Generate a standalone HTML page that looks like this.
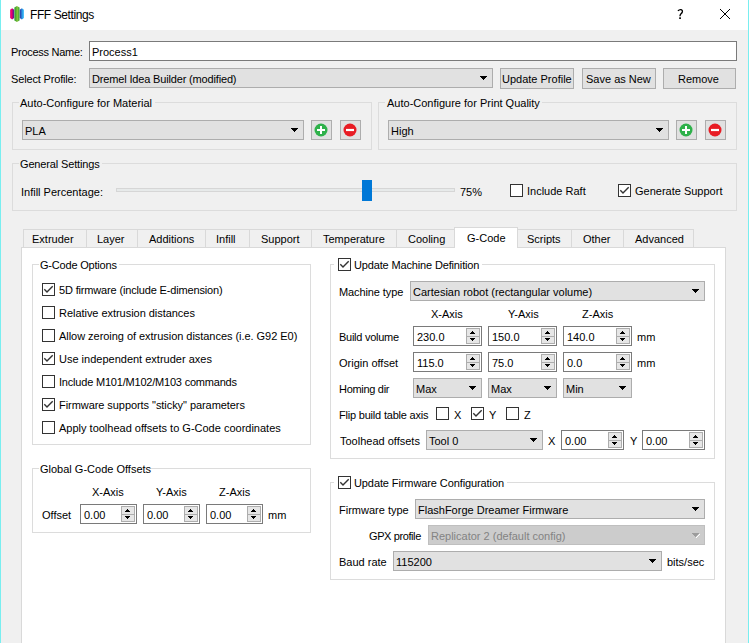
<!DOCTYPE html><html><head><meta charset="utf-8"><style>
html,body{margin:0;padding:0;}
body{width:749px;height:643px;overflow:hidden;background:#f0f0f0;position:relative;font-family:"Liberation Sans",sans-serif;font-size:11px;color:#000;}
.a{position:absolute;box-sizing:border-box;}
.t{position:absolute;line-height:13px;white-space:nowrap;}
</style></head><body>
<div class="a" style="left:0px;top:0px;width:749px;height:30px;background:#ffffff;"></div>
<svg class="a" style="left:9px;top:5px" width="17" height="18" viewBox="0 0 17 18">
<defs>
<linearGradient id="gm" x1="0" y1="0" x2="1" y2="0"><stop offset="0" stop-color="#d8108a"/><stop offset="0.35" stop-color="#f0006a"/><stop offset="1" stop-color="#4a1a9a"/></linearGradient>
<linearGradient id="gg" x1="0" y1="0" x2="1" y2="0"><stop offset="0" stop-color="#22962e"/><stop offset="0.6" stop-color="#86c43a"/><stop offset="1" stop-color="#2a9a34"/></linearGradient>
<linearGradient id="gb" x1="0" y1="0" x2="1" y2="0"><stop offset="0" stop-color="#2a2a9e"/><stop offset="0.7" stop-color="#2aaaf0"/><stop offset="1" stop-color="#60c8f8"/></linearGradient>
</defs>
<path d="M3.15 3.3 L5.2 4.8 V13.1 L3.15 14.6 L1.1 13.1 V4.8 Z" fill="url(#gm)"/>
<path d="M12.85 3.3 L15 4.8 V13.1 L12.85 14.6 L10.7 13.1 V4.8 Z" fill="url(#gb)"/>
<path d="M7.95 0.9 L10.5 2.4 V15.5 L7.95 17 L5.4 15.5 V2.4 Z" fill="url(#gg)"/>
</svg>
<div class="t" style="left:30px;top:9px;font-size:12px;letter-spacing:-0.4px;">FFF Settings</div>
<svg class="a" style="left:0;top:0" width="749" height="30"><path d="M677.9 10.9 Q679.3 9.3 681 9.6 Q682.8 10.1 682.3 12 Q682 13 680.8 14 Q680 14.8 680 16.2" fill="none" stroke="#000" stroke-width="1.35"/><rect x="679.2" y="17.3" width="1.7" height="1.7" fill="#000"/></svg>
<div class="a" style="left:720px;top:9px;width:1px;height:1px;background:#000"></div>
<div class="a" style="left:729px;top:9px;width:1px;height:1px;background:#000"></div>
<div class="a" style="left:721px;top:10px;width:1px;height:1px;background:#000"></div>
<div class="a" style="left:728px;top:10px;width:1px;height:1px;background:#000"></div>
<div class="a" style="left:722px;top:11px;width:1px;height:1px;background:#000"></div>
<div class="a" style="left:727px;top:11px;width:1px;height:1px;background:#000"></div>
<div class="a" style="left:723px;top:12px;width:1px;height:1px;background:#000"></div>
<div class="a" style="left:726px;top:12px;width:1px;height:1px;background:#000"></div>
<div class="a" style="left:724px;top:13px;width:1px;height:1px;background:#000"></div>
<div class="a" style="left:725px;top:13px;width:1px;height:1px;background:#000"></div>
<div class="a" style="left:725px;top:14px;width:1px;height:1px;background:#000"></div>
<div class="a" style="left:724px;top:14px;width:1px;height:1px;background:#000"></div>
<div class="a" style="left:726px;top:15px;width:1px;height:1px;background:#000"></div>
<div class="a" style="left:723px;top:15px;width:1px;height:1px;background:#000"></div>
<div class="a" style="left:727px;top:16px;width:1px;height:1px;background:#000"></div>
<div class="a" style="left:722px;top:16px;width:1px;height:1px;background:#000"></div>
<div class="a" style="left:728px;top:17px;width:1px;height:1px;background:#000"></div>
<div class="a" style="left:721px;top:17px;width:1px;height:1px;background:#000"></div>
<div class="a" style="left:729px;top:18px;width:1px;height:1px;background:#000"></div>
<div class="a" style="left:720px;top:18px;width:1px;height:1px;background:#000"></div>
<div class="a" style="left:0px;top:0px;width:1px;height:643px;background:#78eef0;"></div>
<div class="a" style="left:748px;top:0px;width:1px;height:643px;background:#78eef0;"></div>
<div class="t" style="left:11px;top:46px;letter-spacing:-0.28px;">Process Name:</div>
<div class="a" style="left:89px;top:41px;width:648px;height:20px;box-shadow:inset 0 0 0 1px #7a7a7a;background:#ffffff;"></div>
<div class="t" style="left:92px;top:46px;">Process1</div>
<div class="t" style="left:11px;top:73px;letter-spacing:-0.16px;">Select Profile:</div>
<div class="a" style="left:89px;top:68px;width:404px;height:20px;box-shadow:inset 0 0 0 1px #adadad;background:#e1e1e1;"></div>
<div class="t" style="left:92px;top:73px;letter-spacing:-0.16px;">Dremel Idea Builder (modified)</div>
<div class="a" style="left:480px;top:76px;width:7px;height:1px;background:#000"></div>
<div class="a" style="left:481px;top:77px;width:5px;height:1px;background:#000"></div>
<div class="a" style="left:482px;top:78px;width:3px;height:1px;background:#000"></div>
<div class="a" style="left:483px;top:79px;width:1px;height:1px;background:#000"></div>
<div class="a" style="left:500px;top:68px;width:74px;height:21px;box-shadow:inset 0 0 0 1px #adadad;background:#e1e1e1;"></div>
<div class="t" style="left:502px;top:73px;">Update Profile</div>
<div class="a" style="left:582px;top:68px;width:74px;height:21px;box-shadow:inset 0 0 0 1px #adadad;background:#e1e1e1;"></div>
<div class="t" style="left:586px;top:73px;">Save as New</div>
<div class="a" style="left:663px;top:68px;width:73px;height:21px;box-shadow:inset 0 0 0 1px #adadad;background:#e1e1e1;"></div>
<div class="t" style="left:678px;top:73px;">Remove</div>
<div class="a" style="left:12px;top:102px;width:360px;height:48px;box-shadow:inset 0 0 0 1px #dcdcdc;"></div>
<div class="a" style="left:19px;top:102px;width:136px;height:1px;background:#f0f0f0"></div>
<div class="t" style="left:20px;top:97px;">Auto-Configure for Material</div>
<div class="a" style="left:22px;top:120px;width:282px;height:20px;box-shadow:inset 0 0 0 1px #adadad;background:#e1e1e1;"></div>
<div class="t" style="left:25px;top:125px;">PLA</div>
<div class="a" style="left:291px;top:128px;width:7px;height:1px;background:#000"></div>
<div class="a" style="left:292px;top:129px;width:5px;height:1px;background:#000"></div>
<div class="a" style="left:293px;top:130px;width:3px;height:1px;background:#000"></div>
<div class="a" style="left:294px;top:131px;width:1px;height:1px;background:#000"></div>
<div class="a" style="left:378px;top:102px;width:359px;height:48px;box-shadow:inset 0 0 0 1px #dcdcdc;"></div>
<div class="a" style="left:385px;top:102px;width:157px;height:1px;background:#f0f0f0"></div>
<div class="t" style="left:387px;top:97px;">Auto-Configure for Print Quality</div>
<div class="a" style="left:388px;top:120px;width:281px;height:20px;box-shadow:inset 0 0 0 1px #adadad;background:#e1e1e1;"></div>
<div class="t" style="left:391px;top:125px;">High</div>
<div class="a" style="left:656px;top:128px;width:7px;height:1px;background:#000"></div>
<div class="a" style="left:657px;top:129px;width:5px;height:1px;background:#000"></div>
<div class="a" style="left:658px;top:130px;width:3px;height:1px;background:#000"></div>
<div class="a" style="left:659px;top:131px;width:1px;height:1px;background:#000"></div>
<div class="a" style="left:311px;top:120px;width:21px;height:20px;box-shadow:inset 0 0 0 1px #adadad;background:#e1e1e1;"></div>
<svg class="a" style="left:0;top:0" width="749" height="643"><circle cx="321" cy="130" r="6.5" fill="#2eb14a"/><path d="M317 130 H325 M321 126 V134" stroke="#fff" stroke-width="2"/></svg>
<div class="a" style="left:340px;top:120px;width:21px;height:20px;box-shadow:inset 0 0 0 1px #adadad;background:#e1e1e1;"></div>
<svg class="a" style="left:0;top:0" width="749" height="643"><circle cx="350" cy="130" r="6.5" fill="#e81c24"/><path d="M346 130 H354" stroke="#fff" stroke-width="2.2"/></svg>
<div class="a" style="left:676px;top:120px;width:21px;height:20px;box-shadow:inset 0 0 0 1px #adadad;background:#e1e1e1;"></div>
<svg class="a" style="left:0;top:0" width="749" height="643"><circle cx="686" cy="130" r="6.5" fill="#2eb14a"/><path d="M682 130 H690 M686 126 V134" stroke="#fff" stroke-width="2"/></svg>
<div class="a" style="left:705px;top:120px;width:21px;height:20px;box-shadow:inset 0 0 0 1px #adadad;background:#e1e1e1;"></div>
<svg class="a" style="left:0;top:0" width="749" height="643"><circle cx="715" cy="130" r="6.5" fill="#e81c24"/><path d="M711 130 H719" stroke="#fff" stroke-width="2.2"/></svg>
<div class="a" style="left:12px;top:163px;width:725px;height:48px;box-shadow:inset 0 0 0 1px #dcdcdc;"></div>
<div class="a" style="left:19px;top:163px;width:83px;height:1px;background:#f0f0f0"></div>
<div class="t" style="left:20px;top:158px;letter-spacing:-0.15px;">General Settings</div>
<div class="t" style="left:21px;top:186px;">Infill Percentage:</div>
<div class="a" style="left:116px;top:188px;width:339px;height:4px;box-shadow:inset 0 0 0 1px #d6d6d6;background:#e7eaea;"></div>
<div class="a" style="left:362px;top:180px;width:10px;height:21px;background:#0078d7;"></div>
<div class="t" style="left:460px;top:186px;">75%</div>
<div class="a" style="left:510px;top:184px;width:13px;height:13px;box-shadow:inset 0 0 0 1px #333333;background:#ffffff;"></div>
<div class="t" style="left:527px;top:185px;">Include Raft</div>
<div class="a" style="left:618px;top:184px;width:13px;height:13px;box-shadow:inset 0 0 0 1px #333333;background:#ffffff;"></div>
<svg class="a" style="left:618px;top:184px" width="13" height="13" viewBox="0 0 13 13"><path d="M2.3 6.3 L5 9 L10.7 3.3" fill="none" stroke="#333" stroke-width="1.4"/></svg>
<div class="t" style="left:635px;top:185px;">Generate Support</div>
<div class="a" style="left:23px;top:229px;width:64px;height:19px;box-shadow:inset 0 0 0 1px #d9d9d9;background:#f0f0f0;"></div>
<div class="t" style="left:32px;top:233px;">Extruder</div>
<div class="a" style="left:86px;top:229px;width:52px;height:19px;box-shadow:inset 0 0 0 1px #d9d9d9;background:#f0f0f0;"></div>
<div class="t" style="left:97px;top:233px;">Layer</div>
<div class="a" style="left:137px;top:229px;width:69px;height:19px;box-shadow:inset 0 0 0 1px #d9d9d9;background:#f0f0f0;"></div>
<div class="t" style="left:149px;top:233px;">Additions</div>
<div class="a" style="left:205px;top:229px;width:45px;height:19px;box-shadow:inset 0 0 0 1px #d9d9d9;background:#f0f0f0;"></div>
<div class="t" style="left:216px;top:233px;">Infill</div>
<div class="a" style="left:249px;top:229px;width:63px;height:19px;box-shadow:inset 0 0 0 1px #d9d9d9;background:#f0f0f0;"></div>
<div class="t" style="left:261px;top:233px;">Support</div>
<div class="a" style="left:311px;top:229px;width:86px;height:19px;box-shadow:inset 0 0 0 1px #d9d9d9;background:#f0f0f0;"></div>
<div class="t" style="left:323px;top:233px;">Temperature</div>
<div class="a" style="left:396px;top:229px;width:59px;height:19px;box-shadow:inset 0 0 0 1px #d9d9d9;background:#f0f0f0;"></div>
<div class="t" style="left:408px;top:233px;">Cooling</div>
<div class="a" style="left:517px;top:229px;width:55px;height:19px;box-shadow:inset 0 0 0 1px #d9d9d9;background:#f0f0f0;"></div>
<div class="t" style="left:527px;top:233px;">Scripts</div>
<div class="a" style="left:571px;top:229px;width:53px;height:19px;box-shadow:inset 0 0 0 1px #d9d9d9;background:#f0f0f0;"></div>
<div class="t" style="left:583px;top:233px;">Other</div>
<div class="a" style="left:623px;top:229px;width:71px;height:19px;box-shadow:inset 0 0 0 1px #d9d9d9;background:#f0f0f0;"></div>
<div class="t" style="left:635px;top:233px;">Advanced</div>
<div class="a" style="left:21px;top:247px;width:705px;height:454px;box-shadow:inset 0 0 0 1px #d9d9d9;background:#ffffff;"></div>
<div class="a" style="left:454px;top:227px;width:64px;height:21px;box-shadow:inset 0 0 0 1px #d9d9d9;background:#ffffff;"></div>
<div class="a" style="left:455px;top:247px;width:62px;height:1px;background:#ffffff;"></div>
<div class="t" style="left:467px;top:232px;">G-Code</div>
<div class="a" style="left:32px;top:264px;width:279px;height:181px;box-shadow:inset 0 0 0 1px #dcdcdc;"></div>
<div class="a" style="left:39px;top:264px;width:80px;height:1px;background:#ffffff"></div>
<div class="t" style="left:40px;top:259px;letter-spacing:-0.2px;">G-Code Options</div>
<div class="a" style="left:42px;top:283px;width:13px;height:13px;box-shadow:inset 0 0 0 1px #333333;background:#ffffff;"></div>
<svg class="a" style="left:42px;top:283px" width="13" height="13" viewBox="0 0 13 13"><path d="M2.3 6.3 L5 9 L10.7 3.3" fill="none" stroke="#333" stroke-width="1.4"/></svg>
<div class="t" style="left:59px;top:284px;letter-spacing:-0.16px;">5D firmware (include E-dimension)</div>
<div class="a" style="left:42px;top:306px;width:13px;height:13px;box-shadow:inset 0 0 0 1px #333333;background:#ffffff;"></div>
<div class="t" style="left:59px;top:307px;letter-spacing:-0.04px;">Relative extrusion distances</div>
<div class="a" style="left:42px;top:329px;width:13px;height:13px;box-shadow:inset 0 0 0 1px #333333;background:#ffffff;"></div>
<div class="t" style="left:59px;top:330px;letter-spacing:-0.04px;">Allow zeroing of extrusion distances (i.e. G92 E0)</div>
<div class="a" style="left:42px;top:352px;width:13px;height:13px;box-shadow:inset 0 0 0 1px #333333;background:#ffffff;"></div>
<svg class="a" style="left:42px;top:352px" width="13" height="13" viewBox="0 0 13 13"><path d="M2.3 6.3 L5 9 L10.7 3.3" fill="none" stroke="#333" stroke-width="1.4"/></svg>
<div class="t" style="left:59px;top:353px;letter-spacing:0px;">Use independent extruder axes</div>
<div class="a" style="left:42px;top:375px;width:13px;height:13px;box-shadow:inset 0 0 0 1px #333333;background:#ffffff;"></div>
<div class="t" style="left:59px;top:376px;letter-spacing:-0.2px;">Include M101/M102/M103 commands</div>
<div class="a" style="left:42px;top:398px;width:13px;height:13px;box-shadow:inset 0 0 0 1px #333333;background:#ffffff;"></div>
<svg class="a" style="left:42px;top:398px" width="13" height="13" viewBox="0 0 13 13"><path d="M2.3 6.3 L5 9 L10.7 3.3" fill="none" stroke="#333" stroke-width="1.4"/></svg>
<div class="t" style="left:59px;top:399px;letter-spacing:-0.06px;">Firmware supports "sticky" parameters</div>
<div class="a" style="left:42px;top:421px;width:13px;height:13px;box-shadow:inset 0 0 0 1px #333333;background:#ffffff;"></div>
<div class="t" style="left:59px;top:422px;letter-spacing:0px;">Apply toolhead offsets to G-Code coordinates</div>
<div class="a" style="left:32px;top:468px;width:279px;height:65px;box-shadow:inset 0 0 0 1px #dcdcdc;"></div>
<div class="a" style="left:39px;top:468px;width:111px;height:1px;background:#ffffff"></div>
<div class="t" style="left:40px;top:463px;">Global G-Code Offsets</div>
<div class="t" style="left:92px;top:486px;">X-Axis</div>
<div class="t" style="left:156px;top:486px;">Y-Axis</div>
<div class="t" style="left:219px;top:486px;">Z-Axis</div>
<div class="t" style="left:42px;top:509px;">Offset</div>
<div class="a" style="left:80px;top:504px;width:57px;height:20px;box-shadow:inset 0 0 0 1px #7a7a7a;background:#ffffff;"></div>
<div class="t" style="left:84px;top:509px;">0.00</div>
<div class="a" style="left:121px;top:506px;width:14px;height:9px;box-shadow:inset 0 0 0 1px #adadad;background:#e6e6e6;"></div>
<div class="a" style="left:121px;top:514px;width:14px;height:8px;box-shadow:inset 0 0 0 1px #adadad;background:#e6e6e6;"></div>
<div class="a" style="left:127px;top:509px;width:1px;height:1px;background:#000"></div>
<div class="a" style="left:126px;top:510px;width:3px;height:1px;background:#000"></div>
<div class="a" style="left:125px;top:511px;width:5px;height:1px;background:#000"></div>
<div class="a" style="left:125px;top:516px;width:5px;height:1px;background:#000"></div>
<div class="a" style="left:126px;top:517px;width:3px;height:1px;background:#000"></div>
<div class="a" style="left:127px;top:518px;width:1px;height:1px;background:#000"></div>
<div class="a" style="left:143px;top:504px;width:57px;height:20px;box-shadow:inset 0 0 0 1px #7a7a7a;background:#ffffff;"></div>
<div class="t" style="left:147px;top:509px;">0.00</div>
<div class="a" style="left:184px;top:506px;width:14px;height:9px;box-shadow:inset 0 0 0 1px #adadad;background:#e6e6e6;"></div>
<div class="a" style="left:184px;top:514px;width:14px;height:8px;box-shadow:inset 0 0 0 1px #adadad;background:#e6e6e6;"></div>
<div class="a" style="left:190px;top:509px;width:1px;height:1px;background:#000"></div>
<div class="a" style="left:189px;top:510px;width:3px;height:1px;background:#000"></div>
<div class="a" style="left:188px;top:511px;width:5px;height:1px;background:#000"></div>
<div class="a" style="left:188px;top:516px;width:5px;height:1px;background:#000"></div>
<div class="a" style="left:189px;top:517px;width:3px;height:1px;background:#000"></div>
<div class="a" style="left:190px;top:518px;width:1px;height:1px;background:#000"></div>
<div class="a" style="left:206px;top:504px;width:57px;height:20px;box-shadow:inset 0 0 0 1px #7a7a7a;background:#ffffff;"></div>
<div class="t" style="left:210px;top:509px;">0.00</div>
<div class="a" style="left:247px;top:506px;width:14px;height:9px;box-shadow:inset 0 0 0 1px #adadad;background:#e6e6e6;"></div>
<div class="a" style="left:247px;top:514px;width:14px;height:8px;box-shadow:inset 0 0 0 1px #adadad;background:#e6e6e6;"></div>
<div class="a" style="left:253px;top:509px;width:1px;height:1px;background:#000"></div>
<div class="a" style="left:252px;top:510px;width:3px;height:1px;background:#000"></div>
<div class="a" style="left:251px;top:511px;width:5px;height:1px;background:#000"></div>
<div class="a" style="left:251px;top:516px;width:5px;height:1px;background:#000"></div>
<div class="a" style="left:252px;top:517px;width:3px;height:1px;background:#000"></div>
<div class="a" style="left:253px;top:518px;width:1px;height:1px;background:#000"></div>
<div class="t" style="left:268px;top:509px;">mm</div>
<div class="a" style="left:330px;top:264px;width:385px;height:195px;box-shadow:inset 0 0 0 1px #dcdcdc;"></div>
<div class="a" style="left:334px;top:264px;width:148px;height:1px;background:#ffffff"></div>
<div class="a" style="left:338px;top:258px;width:13px;height:13px;box-shadow:inset 0 0 0 1px #333333;background:#ffffff;"></div>
<svg class="a" style="left:338px;top:258px" width="13" height="13" viewBox="0 0 13 13"><path d="M2.3 6.3 L5 9 L10.7 3.3" fill="none" stroke="#333" stroke-width="1.4"/></svg>
<div class="t" style="left:354px;top:259px;letter-spacing:-0.15px;">Update Machine Definition</div>
<div class="t" style="left:339px;top:286px;letter-spacing:-0.1px;">Machine type</div>
<div class="a" style="left:410px;top:281px;width:295px;height:20px;box-shadow:inset 0 0 0 1px #adadad;background:#e1e1e1;"></div>
<div class="t" style="left:413px;top:286px;">Cartesian robot (rectangular volume)</div>
<div class="a" style="left:692px;top:289px;width:7px;height:1px;background:#000"></div>
<div class="a" style="left:693px;top:290px;width:5px;height:1px;background:#000"></div>
<div class="a" style="left:694px;top:291px;width:3px;height:1px;background:#000"></div>
<div class="a" style="left:695px;top:292px;width:1px;height:1px;background:#000"></div>
<div class="t" style="left:431px;top:308px;">X-Axis</div>
<div class="t" style="left:508px;top:308px;">Y-Axis</div>
<div class="t" style="left:582px;top:308px;">Z-Axis</div>
<div class="t" style="left:339px;top:331px;letter-spacing:-0.27px;">Build volume</div>
<div class="a" style="left:413px;top:326px;width:69px;height:20px;box-shadow:inset 0 0 0 1px #7a7a7a;background:#ffffff;"></div>
<div class="t" style="left:417px;top:331px;">230.0</div>
<div class="a" style="left:466px;top:328px;width:14px;height:9px;box-shadow:inset 0 0 0 1px #adadad;background:#e6e6e6;"></div>
<div class="a" style="left:466px;top:336px;width:14px;height:8px;box-shadow:inset 0 0 0 1px #adadad;background:#e6e6e6;"></div>
<div class="a" style="left:472px;top:331px;width:1px;height:1px;background:#000"></div>
<div class="a" style="left:471px;top:332px;width:3px;height:1px;background:#000"></div>
<div class="a" style="left:470px;top:333px;width:5px;height:1px;background:#000"></div>
<div class="a" style="left:470px;top:338px;width:5px;height:1px;background:#000"></div>
<div class="a" style="left:471px;top:339px;width:3px;height:1px;background:#000"></div>
<div class="a" style="left:472px;top:340px;width:1px;height:1px;background:#000"></div>
<div class="a" style="left:488px;top:326px;width:69px;height:20px;box-shadow:inset 0 0 0 1px #7a7a7a;background:#ffffff;"></div>
<div class="t" style="left:492px;top:331px;">150.0</div>
<div class="a" style="left:541px;top:328px;width:14px;height:9px;box-shadow:inset 0 0 0 1px #adadad;background:#e6e6e6;"></div>
<div class="a" style="left:541px;top:336px;width:14px;height:8px;box-shadow:inset 0 0 0 1px #adadad;background:#e6e6e6;"></div>
<div class="a" style="left:547px;top:331px;width:1px;height:1px;background:#000"></div>
<div class="a" style="left:546px;top:332px;width:3px;height:1px;background:#000"></div>
<div class="a" style="left:545px;top:333px;width:5px;height:1px;background:#000"></div>
<div class="a" style="left:545px;top:338px;width:5px;height:1px;background:#000"></div>
<div class="a" style="left:546px;top:339px;width:3px;height:1px;background:#000"></div>
<div class="a" style="left:547px;top:340px;width:1px;height:1px;background:#000"></div>
<div class="a" style="left:563px;top:326px;width:69px;height:20px;box-shadow:inset 0 0 0 1px #7a7a7a;background:#ffffff;"></div>
<div class="t" style="left:567px;top:331px;">140.0</div>
<div class="a" style="left:616px;top:328px;width:14px;height:9px;box-shadow:inset 0 0 0 1px #adadad;background:#e6e6e6;"></div>
<div class="a" style="left:616px;top:336px;width:14px;height:8px;box-shadow:inset 0 0 0 1px #adadad;background:#e6e6e6;"></div>
<div class="a" style="left:622px;top:331px;width:1px;height:1px;background:#000"></div>
<div class="a" style="left:621px;top:332px;width:3px;height:1px;background:#000"></div>
<div class="a" style="left:620px;top:333px;width:5px;height:1px;background:#000"></div>
<div class="a" style="left:620px;top:338px;width:5px;height:1px;background:#000"></div>
<div class="a" style="left:621px;top:339px;width:3px;height:1px;background:#000"></div>
<div class="a" style="left:622px;top:340px;width:1px;height:1px;background:#000"></div>
<div class="t" style="left:637px;top:331px;">mm</div>
<div class="t" style="left:339px;top:357px;">Origin offset</div>
<div class="a" style="left:413px;top:352px;width:69px;height:20px;box-shadow:inset 0 0 0 1px #7a7a7a;background:#ffffff;"></div>
<div class="t" style="left:417px;top:357px;">115.0</div>
<div class="a" style="left:466px;top:354px;width:14px;height:9px;box-shadow:inset 0 0 0 1px #adadad;background:#e6e6e6;"></div>
<div class="a" style="left:466px;top:362px;width:14px;height:8px;box-shadow:inset 0 0 0 1px #adadad;background:#e6e6e6;"></div>
<div class="a" style="left:472px;top:357px;width:1px;height:1px;background:#000"></div>
<div class="a" style="left:471px;top:358px;width:3px;height:1px;background:#000"></div>
<div class="a" style="left:470px;top:359px;width:5px;height:1px;background:#000"></div>
<div class="a" style="left:470px;top:364px;width:5px;height:1px;background:#000"></div>
<div class="a" style="left:471px;top:365px;width:3px;height:1px;background:#000"></div>
<div class="a" style="left:472px;top:366px;width:1px;height:1px;background:#000"></div>
<div class="a" style="left:488px;top:352px;width:69px;height:20px;box-shadow:inset 0 0 0 1px #7a7a7a;background:#ffffff;"></div>
<div class="t" style="left:492px;top:357px;">75.0</div>
<div class="a" style="left:541px;top:354px;width:14px;height:9px;box-shadow:inset 0 0 0 1px #adadad;background:#e6e6e6;"></div>
<div class="a" style="left:541px;top:362px;width:14px;height:8px;box-shadow:inset 0 0 0 1px #adadad;background:#e6e6e6;"></div>
<div class="a" style="left:547px;top:357px;width:1px;height:1px;background:#000"></div>
<div class="a" style="left:546px;top:358px;width:3px;height:1px;background:#000"></div>
<div class="a" style="left:545px;top:359px;width:5px;height:1px;background:#000"></div>
<div class="a" style="left:545px;top:364px;width:5px;height:1px;background:#000"></div>
<div class="a" style="left:546px;top:365px;width:3px;height:1px;background:#000"></div>
<div class="a" style="left:547px;top:366px;width:1px;height:1px;background:#000"></div>
<div class="a" style="left:563px;top:352px;width:69px;height:20px;box-shadow:inset 0 0 0 1px #7a7a7a;background:#ffffff;"></div>
<div class="t" style="left:567px;top:357px;">0.0</div>
<div class="a" style="left:616px;top:354px;width:14px;height:9px;box-shadow:inset 0 0 0 1px #adadad;background:#e6e6e6;"></div>
<div class="a" style="left:616px;top:362px;width:14px;height:8px;box-shadow:inset 0 0 0 1px #adadad;background:#e6e6e6;"></div>
<div class="a" style="left:622px;top:357px;width:1px;height:1px;background:#000"></div>
<div class="a" style="left:621px;top:358px;width:3px;height:1px;background:#000"></div>
<div class="a" style="left:620px;top:359px;width:5px;height:1px;background:#000"></div>
<div class="a" style="left:620px;top:364px;width:5px;height:1px;background:#000"></div>
<div class="a" style="left:621px;top:365px;width:3px;height:1px;background:#000"></div>
<div class="a" style="left:622px;top:366px;width:1px;height:1px;background:#000"></div>
<div class="t" style="left:637px;top:357px;">mm</div>
<div class="t" style="left:339px;top:383px;letter-spacing:-0.3px;">Homing dir</div>
<div class="a" style="left:413px;top:378px;width:69px;height:20px;box-shadow:inset 0 0 0 1px #adadad;background:#e1e1e1;"></div>
<div class="t" style="left:416px;top:383px;">Max</div>
<div class="a" style="left:469px;top:386px;width:7px;height:1px;background:#000"></div>
<div class="a" style="left:470px;top:387px;width:5px;height:1px;background:#000"></div>
<div class="a" style="left:471px;top:388px;width:3px;height:1px;background:#000"></div>
<div class="a" style="left:472px;top:389px;width:1px;height:1px;background:#000"></div>
<div class="a" style="left:488px;top:378px;width:69px;height:20px;box-shadow:inset 0 0 0 1px #adadad;background:#e1e1e1;"></div>
<div class="t" style="left:491px;top:383px;">Max</div>
<div class="a" style="left:544px;top:386px;width:7px;height:1px;background:#000"></div>
<div class="a" style="left:545px;top:387px;width:5px;height:1px;background:#000"></div>
<div class="a" style="left:546px;top:388px;width:3px;height:1px;background:#000"></div>
<div class="a" style="left:547px;top:389px;width:1px;height:1px;background:#000"></div>
<div class="a" style="left:563px;top:378px;width:69px;height:20px;box-shadow:inset 0 0 0 1px #adadad;background:#e1e1e1;"></div>
<div class="t" style="left:566px;top:383px;">Min</div>
<div class="a" style="left:619px;top:386px;width:7px;height:1px;background:#000"></div>
<div class="a" style="left:620px;top:387px;width:5px;height:1px;background:#000"></div>
<div class="a" style="left:621px;top:388px;width:3px;height:1px;background:#000"></div>
<div class="a" style="left:622px;top:389px;width:1px;height:1px;background:#000"></div>
<div class="t" style="left:339px;top:409px;letter-spacing:-0.2px;">Flip build table axis</div>
<div class="a" style="left:436px;top:407px;width:13px;height:13px;box-shadow:inset 0 0 0 1px #333333;background:#ffffff;"></div>
<div class="t" style="left:454px;top:409px;">X</div>
<div class="a" style="left:471px;top:407px;width:13px;height:13px;box-shadow:inset 0 0 0 1px #333333;background:#ffffff;"></div>
<svg class="a" style="left:471px;top:407px" width="13" height="13" viewBox="0 0 13 13"><path d="M2.3 6.3 L5 9 L10.7 3.3" fill="none" stroke="#333" stroke-width="1.4"/></svg>
<div class="t" style="left:489px;top:409px;">Y</div>
<div class="a" style="left:506px;top:407px;width:13px;height:13px;box-shadow:inset 0 0 0 1px #333333;background:#ffffff;"></div>
<div class="t" style="left:524px;top:409px;">Z</div>
<div class="t" style="left:340px;top:435px;">Toolhead offsets</div>
<div class="a" style="left:426px;top:430px;width:117px;height:20px;box-shadow:inset 0 0 0 1px #adadad;background:#e1e1e1;"></div>
<div class="t" style="left:429px;top:435px;">Tool 0</div>
<div class="a" style="left:530px;top:438px;width:7px;height:1px;background:#000"></div>
<div class="a" style="left:531px;top:439px;width:5px;height:1px;background:#000"></div>
<div class="a" style="left:532px;top:440px;width:3px;height:1px;background:#000"></div>
<div class="a" style="left:533px;top:441px;width:1px;height:1px;background:#000"></div>
<div class="t" style="left:548px;top:435px;">X</div>
<div class="a" style="left:561px;top:430px;width:63px;height:20px;box-shadow:inset 0 0 0 1px #7a7a7a;background:#ffffff;"></div>
<div class="t" style="left:565px;top:435px;">0.00</div>
<div class="a" style="left:608px;top:432px;width:14px;height:9px;box-shadow:inset 0 0 0 1px #adadad;background:#e6e6e6;"></div>
<div class="a" style="left:608px;top:440px;width:14px;height:8px;box-shadow:inset 0 0 0 1px #adadad;background:#e6e6e6;"></div>
<div class="a" style="left:614px;top:435px;width:1px;height:1px;background:#000"></div>
<div class="a" style="left:613px;top:436px;width:3px;height:1px;background:#000"></div>
<div class="a" style="left:612px;top:437px;width:5px;height:1px;background:#000"></div>
<div class="a" style="left:612px;top:442px;width:5px;height:1px;background:#000"></div>
<div class="a" style="left:613px;top:443px;width:3px;height:1px;background:#000"></div>
<div class="a" style="left:614px;top:444px;width:1px;height:1px;background:#000"></div>
<div class="t" style="left:630px;top:435px;">Y</div>
<div class="a" style="left:642px;top:430px;width:63px;height:20px;box-shadow:inset 0 0 0 1px #7a7a7a;background:#ffffff;"></div>
<div class="t" style="left:646px;top:435px;">0.00</div>
<div class="a" style="left:689px;top:432px;width:14px;height:9px;box-shadow:inset 0 0 0 1px #adadad;background:#e6e6e6;"></div>
<div class="a" style="left:689px;top:440px;width:14px;height:8px;box-shadow:inset 0 0 0 1px #adadad;background:#e6e6e6;"></div>
<div class="a" style="left:695px;top:435px;width:1px;height:1px;background:#000"></div>
<div class="a" style="left:694px;top:436px;width:3px;height:1px;background:#000"></div>
<div class="a" style="left:693px;top:437px;width:5px;height:1px;background:#000"></div>
<div class="a" style="left:693px;top:442px;width:5px;height:1px;background:#000"></div>
<div class="a" style="left:694px;top:443px;width:3px;height:1px;background:#000"></div>
<div class="a" style="left:695px;top:444px;width:1px;height:1px;background:#000"></div>
<div class="a" style="left:330px;top:482px;width:385px;height:98px;box-shadow:inset 0 0 0 1px #dcdcdc;"></div>
<div class="a" style="left:334px;top:482px;width:173px;height:1px;background:#ffffff"></div>
<div class="a" style="left:338px;top:476px;width:13px;height:13px;box-shadow:inset 0 0 0 1px #333333;background:#ffffff;"></div>
<svg class="a" style="left:338px;top:476px" width="13" height="13" viewBox="0 0 13 13"><path d="M2.3 6.3 L5 9 L10.7 3.3" fill="none" stroke="#333" stroke-width="1.4"/></svg>
<div class="t" style="left:354px;top:477px;letter-spacing:-0.1px;">Update Firmware Configuration</div>
<div class="t" style="left:339px;top:504px;">Firmware type</div>
<div class="a" style="left:415px;top:499px;width:290px;height:20px;box-shadow:inset 0 0 0 1px #adadad;background:#e1e1e1;"></div>
<div class="t" style="left:418px;top:504px;">FlashForge Dreamer Firmware</div>
<div class="a" style="left:692px;top:507px;width:7px;height:1px;background:#000"></div>
<div class="a" style="left:693px;top:508px;width:5px;height:1px;background:#000"></div>
<div class="a" style="left:694px;top:509px;width:3px;height:1px;background:#000"></div>
<div class="a" style="left:695px;top:510px;width:1px;height:1px;background:#000"></div>
<div class="t" style="left:369px;top:530px;letter-spacing:-0.4px;">GPX profile</div>
<div class="a" style="left:428px;top:525px;width:277px;height:20px;box-shadow:inset 0 0 0 1px #bfbfbf;background:#cccccc;"></div>
<div class="t" style="left:431px;top:530px;color:#838383;">Replicator 2 (default config)</div>
<div class="a" style="left:692px;top:533px;width:7px;height:1px;background:#9c9c9c"></div>
<div class="a" style="left:693px;top:534px;width:5px;height:1px;background:#9c9c9c"></div>
<div class="a" style="left:694px;top:535px;width:3px;height:1px;background:#9c9c9c"></div>
<div class="a" style="left:695px;top:536px;width:1px;height:1px;background:#9c9c9c"></div>
<div class="a" style="left:699px;top:534px;width:1px;height:1px;background:#fff"></div>
<div class="a" style="left:698px;top:535px;width:1px;height:1px;background:#fff"></div>
<div class="a" style="left:697px;top:536px;width:1px;height:1px;background:#fff"></div>
<div class="a" style="left:696px;top:537px;width:1px;height:1px;background:#fff"></div>
<div class="t" style="left:339px;top:556px;">Baud rate</div>
<div class="a" style="left:393px;top:551px;width:269px;height:20px;box-shadow:inset 0 0 0 1px #adadad;background:#e1e1e1;"></div>
<div class="t" style="left:396px;top:556px;">115200</div>
<div class="a" style="left:649px;top:559px;width:7px;height:1px;background:#000"></div>
<div class="a" style="left:650px;top:560px;width:5px;height:1px;background:#000"></div>
<div class="a" style="left:651px;top:561px;width:3px;height:1px;background:#000"></div>
<div class="a" style="left:652px;top:562px;width:1px;height:1px;background:#000"></div>
<div class="t" style="left:667px;top:556px;">bits/sec</div>
</body></html>
